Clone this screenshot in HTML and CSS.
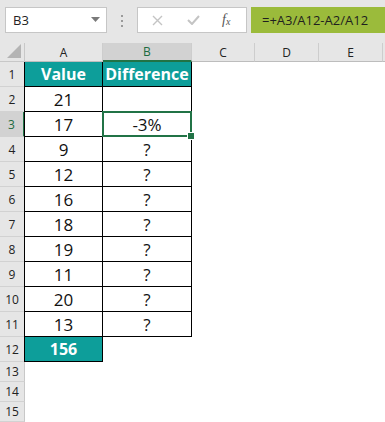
FILE: index.html
```html
<!DOCTYPE html>
<html>
<head>
    <meta charset="UTF-8">
    <link rel="stylesheet" href="styles.css">
</head>
<body>
    <div class="toolbar">
        <div class="namebox">
            <span>B3</span>
            <svg class="caret" width="9" height="5" viewBox="0 0 9 5"><polygon points="0,0 9,0 4.5,5" fill="#7a7a7a"/></svg>
        </div>
        <svg class="grip" width="3" height="12" viewBox="0 0 3 12">
            <rect x="0" y="0" width="2" height="2" fill="#9a9a9a"/>
            <rect x="0" y="5" width="2" height="2" fill="#9a9a9a"/>
            <rect x="0" y="10" width="2" height="2" fill="#9a9a9a"/>
        </svg>
        <div class="fbar">
            <svg width="11" height="11" viewBox="0 0 11 11"><path d="M1 1 L10 10 M10 1 L1 10" stroke="#c4c4c4" stroke-width="1.4"/></svg>
            <svg width="13" height="10" viewBox="0 0 13 10"><path d="M1 5 L5 9 L12 1" stroke="#c4c4c4" stroke-width="2" fill="none"/></svg>
            <span class="fx">f<sub>x</sub></span>
        </div>
        <div class="formula">=+A3/A12-A2/A12</div>
    </div>

    <div class="sheet">
        <div class="corner"><svg width="14" height="14" viewBox="0 0 14 14"><polygon points="14,0 14,14 0,14" fill="#b4b4b4"/></svg></div>
        <div class="ch">A</div>
        <div class="ch sel">B</div>
        <div class="ch">C</div>
        <div class="ch">D</div>
        <div class="ch">E</div>
        <div class="ch last"></div>

        <div class="rh">1</div>
        <div class="c t a head">Value</div>
        <div class="c t head">Difference</div>
        <div class="c"></div><div class="c"></div><div class="c"></div><div class="c"></div>

        <div class="rh">2</div>
        <div class="c t a">21</div>
        <div class="c t"></div>
        <div class="c"></div><div class="c"></div><div class="c"></div><div class="c"></div>

        <div class="rh sel">3</div>
        <div class="c t a">17</div>
        <div class="c t active">-3%</div>
        <div class="c"></div><div class="c"></div><div class="c"></div><div class="c"></div>

        <div class="rh">4</div>
        <div class="c t a">9</div>
        <div class="c t">?</div>
        <div class="c"></div><div class="c"></div><div class="c"></div><div class="c"></div>

        <div class="rh">5</div>
        <div class="c t a">12</div>
        <div class="c t">?</div>
        <div class="c"></div><div class="c"></div><div class="c"></div><div class="c"></div>

        <div class="rh">6</div>
        <div class="c t a">16</div>
        <div class="c t">?</div>
        <div class="c"></div><div class="c"></div><div class="c"></div><div class="c"></div>

        <div class="rh">7</div>
        <div class="c t a">18</div>
        <div class="c t">?</div>
        <div class="c"></div><div class="c"></div><div class="c"></div><div class="c"></div>

        <div class="rh">8</div>
        <div class="c t a">19</div>
        <div class="c t">?</div>
        <div class="c"></div><div class="c"></div><div class="c"></div><div class="c"></div>

        <div class="rh">9</div>
        <div class="c t a">11</div>
        <div class="c t">?</div>
        <div class="c"></div><div class="c"></div><div class="c"></div><div class="c"></div>

        <div class="rh">10</div>
        <div class="c t a">20</div>
        <div class="c t">?</div>
        <div class="c"></div><div class="c"></div><div class="c"></div><div class="c"></div>

        <div class="rh">11</div>
        <div class="c t a">13</div>
        <div class="c t">?</div>
        <div class="c"></div><div class="c"></div><div class="c"></div><div class="c"></div>

        <div class="rh">12</div>
        <div class="c t a head">156</div>
        <div class="c"></div>
        <div class="c"></div><div class="c"></div><div class="c"></div><div class="c"></div>

        <div class="rh">13</div>
        <div class="c"></div><div class="c"></div><div class="c"></div><div class="c"></div><div class="c"></div><div class="c"></div>

        <div class="rh">14</div>
        <div class="c"></div><div class="c"></div><div class="c"></div><div class="c"></div><div class="c"></div><div class="c"></div>

        <div class="rh">15</div>
        <div class="c"></div><div class="c"></div><div class="c"></div><div class="c"></div><div class="c"></div><div class="c"></div>
    </div>
</body>
</html>
```

FILE: styles.css
```css
* {
    box-sizing: border-box;
}

body {
    margin: 0;
    background-color: #ffffff;
    font-family: "Open Sans", "Noto Sans", sans-serif;
    overflow: hidden;
}

/* barra de formulas */
.toolbar {
    height: 43px;
    background-color: #e6e6e6;
    display: flex;
    align-items: flex-start;
    padding-top: 7px;
    padding-left: 5px;
}

.namebox {
    width: 102px;
    height: 26px;
    background-color: #ffffff;
    border: 1px solid #c6c6c6;
    display: flex;
    align-items: center;
    justify-content: space-between;
    padding: 0 6px 0 7px;
    font-size: 13px;
    color: #222222;
}

.caret {
    margin-top: -2px;
}

.grip {
    margin: 8px 0 0 14px;
}

.fbar {
    width: 110px;
    height: 26px;
    margin-left: 13px;
    background-color: #ffffff;
    border: 1px solid #c6c6c6;
    display: flex;
    align-items: center;
    padding-left: 14px;
    gap: 24px;
}

.fx {
    font-family: "Liberation Serif", serif;
    font-style: italic;
    font-size: 14px;
    color: #555555;
    margin-left: -2px;
}

    .fx sub {
        font-size: 10px;
        vertical-align: baseline;
        position: relative;
        top: 1px;
    }

.formula {
    flex: 1;
    height: 26px;
    margin-left: 4px;
    background-color: #9bbb3b;
    font-size: 13px;
    color: #1f1f1f;
    display: flex;
    align-items: center;
    padding-left: 11px;
}

/* hoja */
.sheet {
    display: grid;
    grid-template-columns: 25px 78px 89px 63px 64px 64px 1fr;
    grid-template-rows: 19px repeat(12, 25px) repeat(3, 20px);
}

.corner {
    background-color: #e6e6e6;
    border-right: 1px solid #c8c8c8;
    border-bottom: 1px solid #c8c8c8;
    display: flex;
    align-items: flex-end;
    justify-content: flex-end;
    padding: 0 3px 3px 0;
}

.ch {
    background-color: #e6e6e6;
    border-right: 1px solid #cdcdcd;
    border-bottom: 1px solid #bdbdbd;
    font-size: 12px;
    color: #222222;
    display: flex;
    align-items: center;
    justify-content: center;
}

    .ch.sel {
        background-color: #d2d2d2;
        border-bottom: 2px solid #217346;
        color: #1d6b41;
    }

    .ch.last {
        border-right: none;
    }

.rh {
    background-color: #e6e6e6;
    border-right: 1px solid #c8c8c8;
    border-bottom: 1px solid #d2d2d2;
    font-size: 12px;
    color: #222222;
    display: flex;
    align-items: center;
    justify-content: center;
}

    .rh.sel {
        background-color: #d2d2d2;
        border-right: 2px solid #217346;
        color: #1d6b41;
    }

.c {
    background-color: #ffffff;
    font-size: 17px;
    color: #111111;
    display: flex;
    align-items: center;
    justify-content: center;
}

    .c.t {
        border-right: 1px solid #000000;
        border-bottom: 1px solid #000000;
    }

    .c.a {
        border-left: 1px solid #000000;
        margin-left: -1px;
    }

    .c.head {
        background-color: #0d9e9a;
        color: #ffffff;
        font-weight: bold;
        font-size: 16px;
    }

    .c.active {
        position: relative;
    }

        .c.active::after {
            content: "";
            position: absolute;
            left: -1px;
            top: -1px;
            right: -1px;
            bottom: -1px;
            border: 2px solid #217346;
        }

        .c.active::before {
            content: "";
            position: absolute;
            right: -4px;
            bottom: -4px;
            width: 6px;
            height: 6px;
            background-color: #217346;
            border: 1px solid #ffffff;
            z-index: 1;
        }
```
